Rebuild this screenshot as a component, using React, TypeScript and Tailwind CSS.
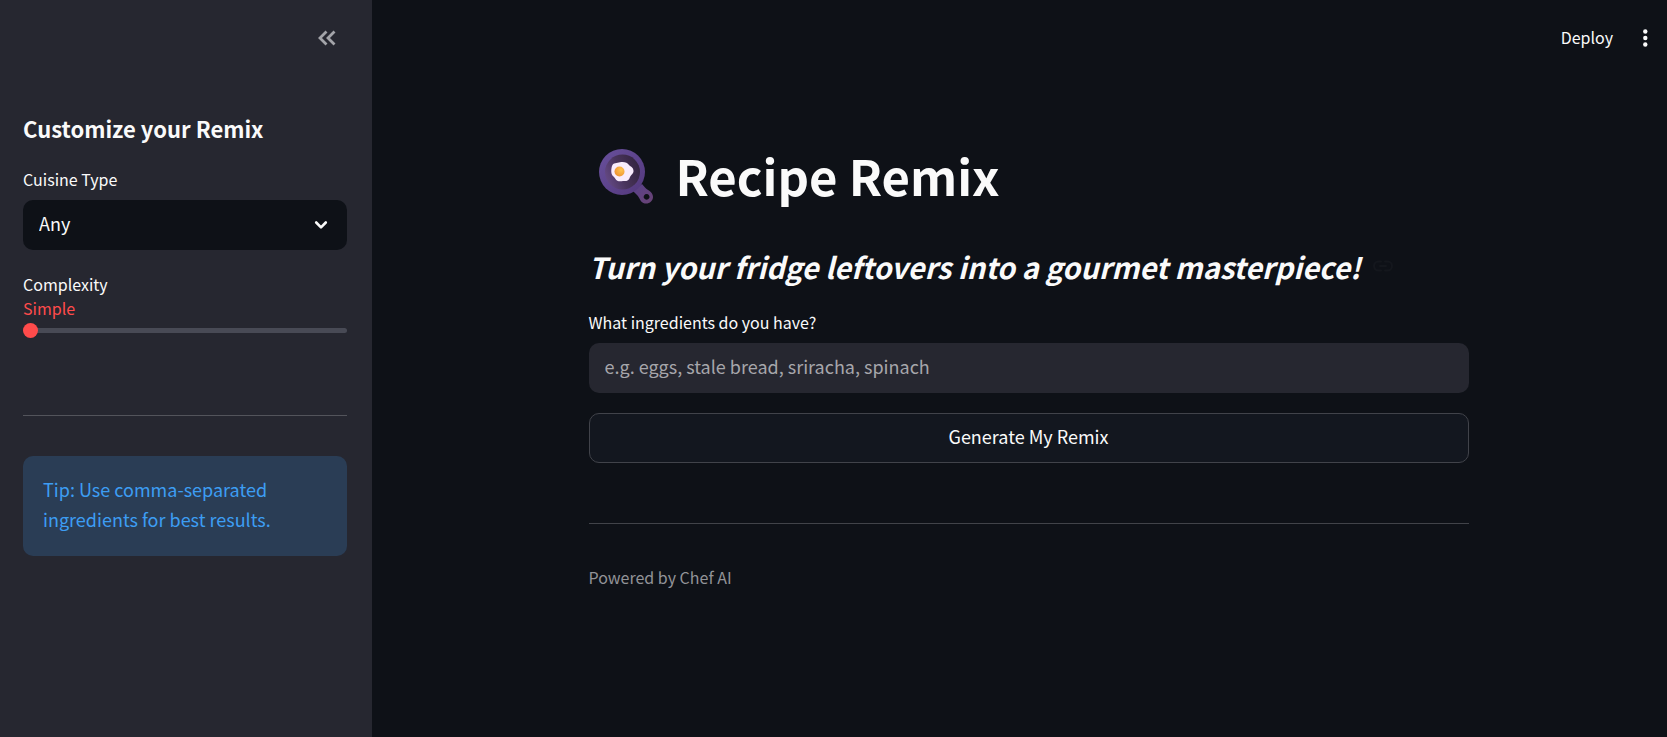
import { useState } from 'react';

const cuisines = ['Any', 'Italian', 'Mexican', 'Indian', 'Chinese', 'Japanese'];
const levels = ['Simple', 'Intermediate', 'Gourmet'];

function PanIcon() {
  return (
    <svg viewBox="0 0 54 55" className="h-[55px] w-[54px] shrink-0" aria-hidden="true">
      <defs>
        <linearGradient id="panRim" x1="0" y1="0" x2="1" y2="1">
          <stop offset="0" stopColor="#68509c" />
          <stop offset="1" stopColor="#53387c" />
        </linearGradient>
        <linearGradient id="panWell" x1="0" y1="0.7" x2="1" y2="0.3">
          <stop offset="0" stopColor="#654a86" />
          <stop offset="0.45" stopColor="#49345c" />
          <stop offset="1" stopColor="#33243f" />
        </linearGradient>
        <linearGradient id="panHandle" x1="0" y1="0" x2="1" y2="1">
          <stop offset="0" stopColor="#58418a" />
          <stop offset="1" stopColor="#694374" />
        </linearGradient>
        <radialGradient id="yolk" cx="0.65" cy="0.35" r="0.7">
          <stop offset="0" stopColor="#ffc44f" />
          <stop offset="1" stopColor="#ee9333" />
        </radialGradient>
      </defs>
      <path
        fillRule="evenodd"
        fill="url(#panHandle)"
        d="M34 42 L43 35 L46 38.500 C47.500 40.500 49.800 41 51.800 43 C54.800 46 54.600 50 52 52.500 C49 55.500 44.500 55 42 52.200 C40.500 50 39.800 48 38.500 46.500 Z M47.600 45 a2.900 2.900 0 1 0 0.010 0 Z"
      />
      <circle cx="23" cy="23" r="23" fill="url(#panRim)" />
      <circle cx="23.500" cy="23" r="17.500" fill="url(#panWell)" />
      <path
        fill="#f8ebfc"
        d="M13 17 C14 13.500 18 14 21 13.200 C25 12.400 28.500 13.500 30 16 C31 17.500 34.500 18 34.500 22 C34.500 25 32 25.500 31 28 C30 31.500 27.500 32.500 24 32 C21 32.500 17.500 32.500 16.500 30 C15 27 12.500 27 12.300 23 C12.200 20 12.500 19 13 17 Z"
      />
      <circle cx="20.500" cy="22.500" r="5" fill="url(#yolk)" />
    </svg>
  );
}

function LinkIcon() {
  return (
    <svg viewBox="0 0 20 12" className="h-3 w-5" fill="none" stroke="#14171d" strokeWidth="2" strokeLinecap="round" aria-hidden="true">
      <path d="M8 1.500 H5.500 a4.500 4.500 0 0 0 0 9 H8 M12 1.500 h2.500 a4.500 4.500 0 0 1 0 9 H12 M7 6 h6" />
    </svg>
  );
}

function Sidebar() {
  const [cuisine, setCuisine] = useState('Any');
  const [level, setLevel] = useState(0);

  return (
    <aside className="w-[372px] shrink-0 bg-[#262730] pl-[23px] pr-[25px]">
      <div className="flex h-[76px] items-center justify-end pr-[11px]">
        <button type="button" aria-label="Collapse sidebar" className="text-[#a3a4a9]">
          <svg viewBox="0 0 18 16" className="h-4 w-[18px]" fill="none" stroke="currentColor" strokeWidth="2.800" aria-hidden="true">
            <path d="M8.500 1.500 L2 8 L8.500 14.500 M16.500 1.500 L10 8 L16.500 14.500" />
          </svg>
        </button>
      </div>

      <h2 className="mt-[34px] text-[22px] font-bold leading-9">Customize your Remix</h2>

      <label htmlFor="cuisine" className="mt-[21px] block text-base leading-6">
        Cuisine Type
      </label>
      <div className="relative mt-[9px]">
        <select
          id="cuisine"
          value={cuisine}
          onChange={e => setCuisine(e.target.value)}
          className="h-[50px] w-full appearance-none rounded-[10px] bg-[#0e1117] px-4 pb-1 text-lg"
        >
          {cuisines.map(name => (
            <option key={name}>{name}</option>
          ))}
        </select>
        <svg
          viewBox="0 0 14 10"
          className="pointer-events-none absolute right-[19px] top-5 h-[10px] w-[14px]"
          fill="none"
          stroke="currentColor"
          strokeWidth="2.600"
          strokeLinecap="round"
          strokeLinejoin="round"
          aria-hidden="true"
        >
          <path d="M2.200 2.500 L7 7.300 L11.800 2.500" />
        </svg>
      </div>

      <label htmlFor="complexity" className="mt-[22px] block text-base leading-6">
        Complexity
      </label>
      <p className="text-base leading-6 text-[#ff4b4b]">{levels[level]}</p>
      <input
        id="complexity"
        type="range"
        min={0}
        max={levels.length - 1}
        value={level}
        onChange={e => setLevel(Number(e.target.value))}
        className="mt-0.5 block h-4 w-full appearance-none bg-transparent [&::-webkit-slider-runnable-track]:h-[5px] [&::-webkit-slider-runnable-track]:rounded-full [&::-webkit-slider-runnable-track]:bg-[#484a55] [&::-webkit-slider-thumb]:-mt-[5px] [&::-webkit-slider-thumb]:size-[15px] [&::-webkit-slider-thumb]:appearance-none [&::-webkit-slider-thumb]:rounded-full [&::-webkit-slider-thumb]:bg-[#ff4b4b]"
      />

      <hr className="mb-10 mt-[77px] border-[#53545b]" />

      <p className="rounded-[10px] bg-[#2a3d55] px-5 pb-[22px] pt-[18px] text-lg leading-[30px] text-[#3d9df3]">
        Tip: Use comma-separated ingredients for best results.
      </p>
    </aside>
  );
}

export default function App() {
  const [ingredients, setIngredients] = useState('');

  return (
    <div className="flex min-h-screen bg-[#0e1117] font-['Noto_Sans_CJK_JP',sans-serif] text-[#fafafa]">
      <Sidebar />
      <div className="min-w-0 flex-1">
        <header className="flex h-[76px] items-center justify-end gap-[30px] pr-5">
          <button type="button" className="pb-0.5 text-base">
            Deploy
          </button>
          <button type="button" aria-label="Main menu">
            <svg viewBox="0 0 4 18" className="h-[18px] w-1 overflow-visible" fill="currentColor" aria-hidden="true">
              <circle cx="2.300" cy="2.500" r="2.200" />
              <circle cx="2.300" cy="9" r="2.200" />
              <circle cx="2.300" cy="15.500" r="2.200" />
            </svg>
          </button>
        </header>

        <main className="pl-[18px]">
          <div className="mx-auto max-w-[880px]">
            <h1 className="mt-[67px] flex h-[66px] items-center gap-[23px] pl-[10px] text-[49px] font-bold leading-[62px]">
              <PanIcon />
              <span className="pb-0.5">Recipe Remix</span>
            </h1>

            <h3 className="mt-9 flex items-center gap-3 text-[29px] font-bold italic leading-[42px]">
              Turn your fridge leftovers into a gourmet masterpiece!
              <LinkIcon />
            </h3>

            <form onSubmit={e => e.preventDefault()}>
              <label htmlFor="ingredients" className="mt-[23px] block text-base leading-6">
                What ingredients do you have?
              </label>
              <input
                id="ingredients"
                type="text"
                value={ingredients}
                onChange={e => setIngredients(e.target.value)}
                placeholder="e.g. eggs, stale bread, sriracha, spinach"
                className="mt-[9px] block h-[50px] w-full rounded-[10px] bg-[#262730] px-4 pb-1 text-lg placeholder:text-[#a6a6ab]"
              />
              <button
                type="submit"
                className="mt-5 block h-[50px] w-full rounded-[10px] border border-[#41434a] bg-[#13171f] pb-1 text-lg"
              >
                Generate My Remix
              </button>
            </form>

            <hr className="mb-[41px] mt-[60px] border-[#414349]" />

            <p className="text-base leading-6 text-[#929397]">Powered by Chef AI</p>
          </div>
        </main>
      </div>
    </div>
  );
}
